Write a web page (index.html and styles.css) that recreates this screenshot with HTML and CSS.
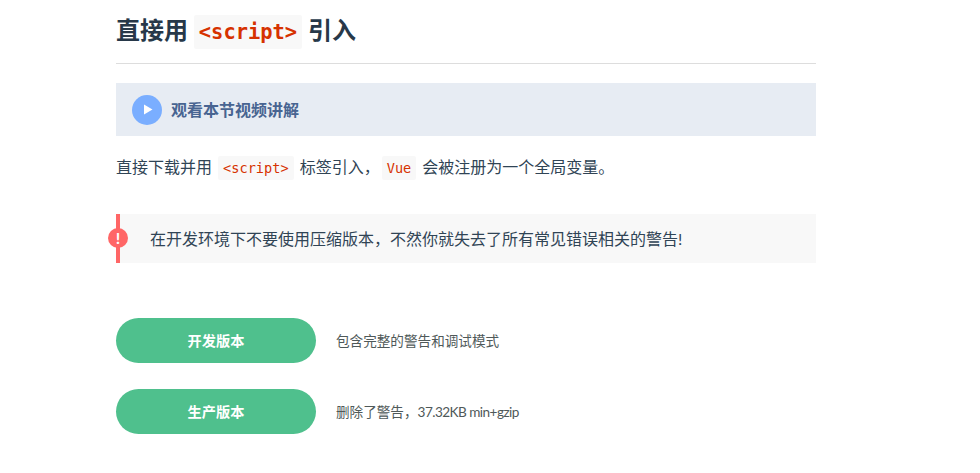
FILE: index.html
```html
<!DOCTYPE html>
<html lang="zh-CN">
<head>
<meta charset="utf-8">
<title>Vue</title>
<link rel="stylesheet" href="styles.css">
</head>
<body>
<main class="content">
  <h2 class="title">直接用 <code class="title-code">&lt;script&gt;</code> 引入</h2>
  <div class="video-link">
    <span class="play"><svg width="10" height="11" viewBox="0 0 10 11"><path d="M1 0.5 L9.5 5.5 L1 10.5 Z" fill="#fff"/></svg></span>
    <span class="video-text">观看本节视频讲解</span>
  </div>
  <p class="para">直接下载并用 <code class="code">&lt;script&gt;</code> 标签引入，<code class="code">Vue</code> 会被注册为一个全局变量。</p>
  <div class="warning">
    <span class="bang">!</span>
    <p class="warning-text">在开发环境下不要使用压缩版本，不然你就失去了所有常见错误相关的警告!</p>
  </div>
  <div class="dl first">
    <span class="btn">开发版本</span>
    <span class="dl-text">包含完整的警告和调试模式</span>
  </div>
  <div class="dl">
    <span class="btn">生产版本</span>
    <span class="dl-text">删除了警告，<span class="latin">37.32KB min+gzip</span></span>
  </div>
</main>
</body>
</html>
```
FILE: styles.css
```css
html, body { margin: 0; padding: 0; background: #fff; }
body { height: 473px; overflow: hidden; font-family: Lato, "Noto Sans CJK SC", sans-serif; color: #304455; }
.content { width: 700px; margin-left: 116px; }
.title { margin: 0; height: 63px; border-bottom: 1px solid #ddd; font-size: 24px; line-height: 60px; font-weight: 700; color: #273849; white-space: nowrap; }
.title-code { font-family: "DejaVu Sans Mono", monospace; font-size: 20.4px; font-weight: 700; color: #d63200; background: #f8f8f8; padding: 5px; border-radius: 2px; }
.video-link { margin-top: 19px; height: 53px; box-sizing: border-box; background: #e7ecf3; display: flex; align-items: center; padding-left: 16px; gap: 9px; }
.play { width: 30px; height: 30px; border-radius: 50%; background: #7aaeff; display: flex; align-items: center; justify-content: center; padding-left: 1px; box-sizing: border-box; }
.video-text { font-size: 16px; font-weight: 700; color: #486491; padding-bottom: 2px; }
.para { margin: 19px 0 0; height: 26px; font-size: 16px; line-height: 24px; color: #304455; white-space: nowrap; }
.code { font-family: "DejaVu Sans Mono", monospace; font-size: 13.6px; color: #d63200; background: #f8f8f8; padding: 4px 5px; border-radius: 2px; margin: 0 2px; }
.warning { position: relative; margin-top: 33px; height: 49px; box-sizing: border-box; background: #f8f8f8; border-left: 4px solid #f66; display: flex; align-items: center; padding-left: 30px; }
.warning-text { margin: 0; font-size: 16px; color: #304455; padding-bottom: 2px; }
.bang { position: absolute; left: -12px; top: 14px; width: 20px; height: 20px; border-radius: 50%; background: #f66; color: #fff; font: 700 16px/20px Lato, sans-serif; text-align: center; }
.dl { margin-top: 26px; display: flex; align-items: center; gap: 20px; }
.dl.first { margin-top: 55px; }
.btn { width: 200px; height: 45px; box-sizing: border-box; padding-bottom: 1px; border-radius: 23px; background: #4fc08d; color: #fff; font-size: 14.2px; font-weight: 700; display: flex; align-items: center; justify-content: center; }
.dl-text { font-size: 13.6px; color: #4f5959; padding-bottom: 1px; }
.latin { letter-spacing: -0.55px; }
```
